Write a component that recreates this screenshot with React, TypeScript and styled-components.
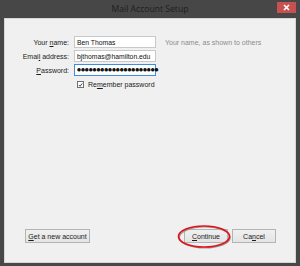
import styled, { createGlobalStyle } from "styled-components";

const GlobalStyle = createGlobalStyle`
  html, body {
    margin: 0;
    padding: 0;
    background: #474747;
  }
  body {
    font-family: "Liberation Sans", Arial, sans-serif;
  }
`;

// letter with the keyboard accelerator underline
const Acc = ({ text, at }: { text: string; at: number }) => (
  <>
    {text.slice(0, at)}
    <U>{text[at]}</U>
    {text.slice(at + 1)}
  </>
);

const App = () => {
  return (
    <>
      <GlobalStyle />
      <Window>
        <TitleBar>
          <span />
          <Title>Mail Account Setup</Title>
          <Close>
            <svg width="7" height="7" viewBox="0 0 7 7">
              <path d="M1 1 L6 6 M6 1 L1 6" stroke="#fff" strokeWidth="1.6" />
            </svg>
          </Close>
        </TitleBar>
        <Content>
          <Form>
            <Label>
              <Acc text="Your name:" at={5} />
            </Label>
            <Field>Ben Thomas</Field>
            <Hint>Your name, as shown to others</Hint>

            <Label>
              <Acc text="Email address:" at={4} />
            </Label>
            <Field>bjthomas@hamilton.edu</Field>
            <span />

            <Label>
              <Acc text="Password:" at={0} />
            </Label>
            <Field $focused>
              <Dots>{"●".repeat(21)}</Dots>
              <Caret />
            </Field>
            <span />

            <CheckRow>
              <Box>
                <svg width="7" height="7" viewBox="0 0 7 7">
                  <path d="M1.2 3.6 L2.9 5.3 L5.9 1.3" stroke="#222" strokeWidth="1.2" fill="none" />
                </svg>
              </Box>
              <CheckText>
                <Acc text="Remember password" at={2} />
              </CheckText>
            </CheckRow>
          </Form>

          <ButtonRow>
            <Button $w={65}>
              <Acc text="Get a new account" at={0} />
            </Button>
            <Right>
              <Circled>
                <Button $w={44}>
                  <Acc text="Continue" at={0} />
                </Button>
                <Ring viewBox="0 0 54 25" preserveAspectRatio="none">
                  <ellipse cx="27" cy="12.5" rx="25.5" ry="10.5" fill="none" stroke="#999" strokeWidth="1.2" transform="translate(0.8 1)" />
                  <ellipse cx="27" cy="12.5" rx="25.5" ry="10.5" fill="none" stroke="#e0121a" strokeWidth="1.7" />
                </Ring>
              </Circled>
              <Button $w={44}>
                <Acc text="Cancel" at={2} />
              </Button>
            </Right>
          </ButtonRow>
        </Content>
      </Window>
    </>
  );
};

export default App;

const Window = styled.div`
  width: 300px;
  height: 266px;
  box-sizing: border-box;
  background: #474747;
  padding: 0 4px 3px 4px;
  display: flex;
  flex-direction: column;
`;

const TitleBar = styled.div`
  height: 18px;
  display: grid;
  grid-template-columns: 1fr auto 1fr;
  align-items: start;
`;

const Title = styled.div`
  font-family: "Open Sans", "Liberation Sans", sans-serif;
  font-size: 8.6px;
  line-height: 18px;
  color: #1e1e1e;
`;

const Close = styled.div`
  justify-self: end;
  margin-top: 2px;
  width: 19px;
  height: 11px;
  background: #c75050;
  display: flex;
  align-items: center;
  justify-content: center;
`;

const Content = styled.div`
  flex: 1;
  background: #f0f0f0;
  border: 1px solid #d6d6d6;
  display: flex;
  flex-direction: column;
  justify-content: space-between;
  padding: 17px 19px 19px 15px;
  font-size: 7px;
  color: #1b1b1b;
`;

const Form = styled.div`
  display: grid;
  grid-template-columns: 49px 82px auto;
  column-gap: 5px;
  row-gap: 2px;
  align-items: center;
`;

const U = styled.span`
  text-decoration: underline;
`;

const Label = styled.div`
  text-align: right;
  white-space: nowrap;
`;

const Field = styled.div<{ $focused?: boolean }>`
  height: 12px;
  box-sizing: border-box;
  background: #fff;
  border: 1px solid ${(p) => (p.$focused ? "#3c8fe0" : "#c9c9c9")};
  padding: 0 2px;
  display: flex;
  align-items: center;
  white-space: nowrap;
  font-size: 6.8px;
  color: #111;
`;

const Dots = styled.span`
  font-family: "DejaVu Sans", sans-serif;
  font-size: 4.5px;
  line-height: 6px;
  letter-spacing: -0.05px;
`;

const Caret = styled.span`
  width: 1px;
  height: 8px;
  background: #000;
`;

const Hint = styled.div`
  color: #8c8c8c;
  white-space: nowrap;
  margin-left: 4px;
`;

const CheckRow = styled.div`
  grid-column: 2 / 4;
  display: flex;
  align-items: center;
  gap: 4px;
  margin-top: 3px;
  padding-left: 3px;
`;

const Box = styled.div`
  width: 7px;
  height: 7px;
  box-sizing: border-box;
  border: 1px solid #707070;
  background: #fff;
  display: flex;
  align-items: center;
  justify-content: center;
  svg {
    width: 6px;
    height: 6px;
  }
`;

const CheckText = styled.span`
  white-space: nowrap;
`;

const ButtonRow = styled.div`
  display: flex;
  justify-content: space-between;
  align-items: center;
  padding-left: 5px;
`;

const Right = styled.div`
  display: flex;
  gap: 4px;
`;

const Circled = styled.div`
  position: relative;
`;

const Ring = styled.svg`
  position: absolute;
  left: -7px;
  top: -5px;
  width: calc(100% + 10px);
  height: calc(100% + 11px);
  pointer-events: none;
`;

const Button = styled.div<{ $w: number }>`
  width: ${(p) => p.$w}px;
  height: 14px;
  box-sizing: border-box;
  border: 1px solid #b4b4b4;
  background: linear-gradient(#f0f0f0, #e4e4e4);
  display: flex;
  align-items: center;
  justify-content: center;
  white-space: nowrap;
  color: #1b1b1b;
`;
